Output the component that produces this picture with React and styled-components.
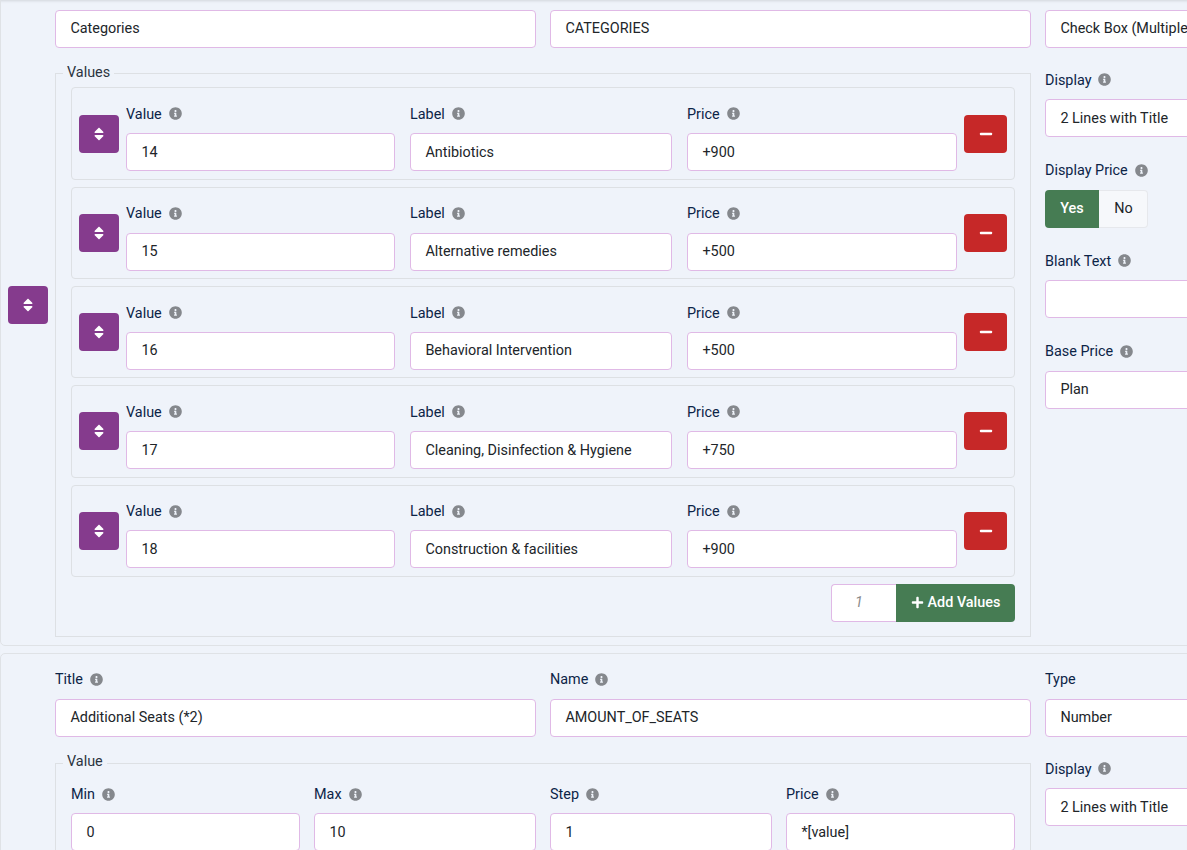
import styled, { createGlobalStyle } from "styled-components";
import { FaInfoCircle, FaMinus, FaPlus, FaSort } from "react-icons/fa";

const GlobalStyle = createGlobalStyle`
  html, body {
    margin: 0;
    padding: 0;
    background: #eff3fa;
  }
  * {
    box-sizing: border-box;
  }
`;

const Page = styled.div`
  height: 850px;
  overflow: hidden;
  background: #eff3fa;
  box-shadow: inset 0 3px 3px -2px rgba(0, 0, 0, 0.12);
  font-family: Roboto, "Liberation Sans", sans-serif;
  font-size: 14.4px;
  color: #212529;
`;

// the page is scrolled a little, the first panel's label row sits above the fold
const Scrolled = styled.div`
  margin-top: -36.3px;
`;

const Panel = styled.section`
  display: flex;
  align-items: center;
  gap: 7px;
  width: 1540px;
  min-height: ${(p) => p.$minHeight || 0}px;
  padding-left: 7px;
  margin-bottom: 7px;
  border: 1px solid #dfe2e6;
  border-radius: 5px;
`;

const PanelBody = styled.div`
  display: grid;
  grid-template-columns: 976px 481px;
  column-gap: 14px;
  align-self: flex-start;
  padding: 15.5px 0 8px;
`;

const HeaderRow = styled.div`
  grid-column: 1 / span 2;
  display: grid;
  grid-template-columns: 481px 481px 481px;
  column-gap: 14px;
`;

const SideColumn = styled.div`
  display: flex;
  flex-direction: column;
  padding-top: ${(p) => p.$top}px;
`;

const Field = styled.div`
  display: flex;
  flex-direction: column;
  margin-top: ${(p) => p.$top || 0}px;
`;

const Label = styled.label`
  display: flex;
  align-items: center;
  gap: 7px;
  height: 20px;
  padding-top: 2px;
  margin-bottom: 9.4px;
  color: #0c2447;
  line-height: 18px;
`;

const InfoIcon = styled(FaInfoCircle)`
  width: 13px;
  height: 13px;
  margin-bottom: 2px;
  color: #85888d;
`;

const Input = styled.input`
  display: block;
  width: 100%;
  height: 38px;
  padding: 0 14.4px;
  background: #fff;
  border: 1px solid #e0b9e6;
  border-radius: 4px;
  outline: none;
  font: inherit;
  color: #212529;
`;

const Fieldset = styled.fieldset`
  margin: 16.4px 0 0;
  padding: ${(p) => p.$top}px 15px 14px;
  min-width: 0;
  border: 1px solid #dde0e4;
`;

const Legend = styled.legend`
  margin-left: -8px;
  padding: 1px 4px 3px;
  color: #2b3440;
  line-height: 16px;
`;

const ValueRow = styled.div`
  display: flex;
  align-items: center;
  gap: 7px;
  height: 92.4px;
  margin-bottom: 6.9px;
  padding: 0 7px;
  border: 1px solid #dde0e4;
  border-radius: 4px;
`;

const RowFields = styled.div`
  display: grid;
  flex: 1;
  grid-template-columns: 269px 262px 270px;
  column-gap: 15px;
  padding-top: 8.2px;
`;

const IconButton = styled.button`
  display: flex;
  align-items: center;
  justify-content: center;
  flex: none;
  width: ${(p) => p.$width}px;
  height: 38px;
  padding: 0;
  border: none;
  border-radius: 4px;
  background: ${(p) => p.$color};
  color: #fff;
  font-size: ${(p) => p.$size}px;
`;

const AddBar = styled.div`
  display: flex;
  justify-content: flex-end;
`;

const QtyInput = styled.input`
  width: 65px;
  height: 38px;
  padding: 0 23px;
  background: #fff;
  border: 1px solid #e0b9e6;
  border-right: none;
  border-radius: 4px 0 0 4px;
  outline: none;
  font: italic 14.4px Roboto, sans-serif;
  &::placeholder {
    color: #8b8b8b;
    opacity: 1;
  }
`;

const AddButton = styled.button`
  display: flex;
  align-items: center;
  justify-content: center;
  gap: 4px;
  width: 119px;
  height: 38px;
  padding: 0;
  border: none;
  border-radius: 0 4px 4px 0;
  background: #467c53;
  color: #fff;
  font: 500 14.4px Roboto, sans-serif;
`;

const Toggle = styled.div`
  display: flex;
  width: 103px;
  height: 38px;
`;

const ToggleOption = styled.button`
  flex: ${(p) => (p.$active ? "0 0 54px" : "1")};
  padding: ${(p) => (p.$active ? 0 : "0 0 0 1px")};
  background: ${(p) => (p.$active ? "#467c53" : "#f6f8fb")};
  color: ${(p) => (p.$active ? "#fff" : "#212529")};
  border: ${(p) => (p.$active ? "none" : "1px solid #e6e8ec")};
  border-left: none;
  border-radius: ${(p) => (p.$active ? "4px 0 0 4px" : "0 4px 4px 0")};
  font: ${(p) => (p.$active ? 500 : 400)} 14.4px Roboto, sans-serif;
`;

const SeatGrid = styled.div`
  display: grid;
  grid-template-columns: 229px 222px 222px 229px;
  column-gap: 14px;
`;

const values = [
  { value: "14", label: "Antibiotics", price: "+900" },
  { value: "15", label: "Alternative remedies", price: "+500" },
  { value: "16", label: "Behavioral Intervention", price: "+500" },
  { value: "17", label: "Cleaning, Disinfection & Hygiene", price: "+750" },
  { value: "18", label: "Construction & facilities", price: "+900" },
];

// no label text means an empty label row: that row is scrolled away in panel one
const LabelledInput = ({ label, value, top, noInfo }) => (
  <Field $top={top}>
    <Label>
      {label}
      {label && !noInfo && <InfoIcon />}
    </Label>
    <Input defaultValue={value} />
  </Field>
);

const Handle = () => (
  <IconButton $width={40} $size={16} $color="#853b8d">
    <FaSort />
  </IconButton>
);

const App = () => {
  return (
    <Page>
      <GlobalStyle />
      <Scrolled>
        <Panel>
          <Handle />
          <PanelBody>
            <HeaderRow>
              <LabelledInput value="Categories" />
              <LabelledInput value="CATEGORIES" />
              <LabelledInput value="Check Box (Multiple)" />
            </HeaderRow>
            <Fieldset $top={3.4}>
              <Legend>Values</Legend>
              {values.map((row) => (
                <ValueRow key={row.value}>
                  <Handle />
                  <RowFields>
                    <LabelledInput label="Value" value={row.value} />
                    <LabelledInput label="Label" value={row.label} />
                    <LabelledInput label="Price" value={row.price} />
                  </RowFields>
                  <IconButton $width={43} $size={14} $color="#c62828">
                    <FaMinus />
                  </IconButton>
                </ValueRow>
              ))}
              <AddBar>
                <QtyInput placeholder="1" />
                <AddButton>
                  <FaPlus size={13} />
                  Add Values
                </AddButton>
              </AddBar>
            </Fieldset>
            <SideColumn $top={22.4}>
              <LabelledInput label="Display" value="2 Lines with Title" />
              <Field $top={23}>
                <Label>
                  Display Price
                  <InfoIcon />
                </Label>
                <Toggle>
                  <ToggleOption $active>Yes</ToggleOption>
                  <ToggleOption>No</ToggleOption>
                </Toggle>
              </Field>
              <LabelledInput label="Blank Text" top={23} />
              <LabelledInput label="Base Price" value="Plan" top={23} />
            </SideColumn>
          </PanelBody>
        </Panel>
        <Panel $minHeight={480}>
          <Handle />
          <PanelBody>
            <HeaderRow>
              <LabelledInput label="Title" value="Additional Seats (*2)" />
              <LabelledInput label="Name" value="AMOUNT_OF_SEATS" />
              <LabelledInput label="Type" value="Number" noInfo />
            </HeaderRow>
            <Fieldset $top={11}>
              <Legend>Value</Legend>
              <SeatGrid>
                <LabelledInput label="Min" value="0" />
                <LabelledInput label="Max" value="10" />
                <LabelledInput label="Step" value="1" />
                <LabelledInput label="Price" value="*[value]" />
              </SeatGrid>
            </Fieldset>
            <SideColumn $top={22}>
              <LabelledInput label="Display" value="2 Lines with Title" />
            </SideColumn>
          </PanelBody>
        </Panel>
      </Scrolled>
    </Page>
  );
};

export default App;
